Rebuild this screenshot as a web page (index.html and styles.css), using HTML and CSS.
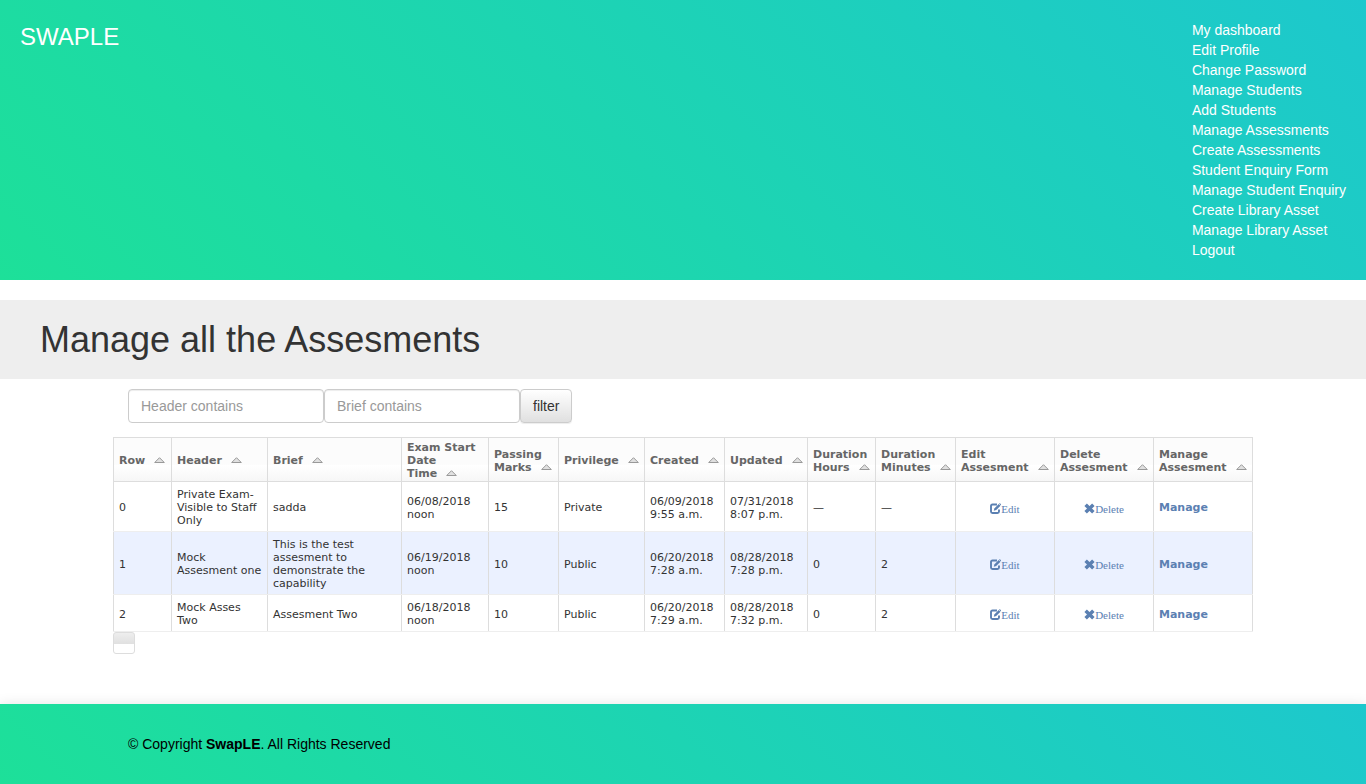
FILE: index.html
```
<!DOCTYPE html>
<html lang="en">
<head>
<meta charset="utf-8">
<title>Manage all the Assesments</title>
<link rel="stylesheet" href="styles.css">
</head>
<body>
<svg class="symbols" aria-hidden="true">
  <symbol id="sort" viewBox="0 0 11 6"><path d="M.7 5.500 5.500.7l4.800 4.800z" fill="#e0e0e0" stroke="#999" stroke-width="1"/></symbol>
  <symbol id="edit" viewBox="0 0 11 11"><path d="M7 1.500H2.500Q1 1.500 1 3v5.500Q1 10 2.500 10h5Q9 10 9 8.500V6.500" fill="none" stroke="currentColor" stroke-width="1.900"/><path d="M3.800 7.700l.5-2.300L8.700 1 10.500 2.800 6.200 7.100z" fill="currentColor"/><path d="M9.200.5l.5-.5L11 1.300v.6l-.4.300z" fill="currentColor"/></symbol>
  <symbol id="remove" viewBox="0 0 10 10"><path d="M1.500 1.500l7 7M8.500 1.500l-7 7" stroke="currentColor" stroke-width="3.200"/></symbol>
</svg>
<header class="header">
  <a class="brand" href="#">SWAPLE</a>
  <nav class="menu">
    <a href="#">My dashboard</a>
    <a href="#">Edit Profile</a>
    <a href="#">Change Password</a>
    <a href="#">Manage Students</a>
    <a href="#">Add Students</a>
    <a href="#">Manage Assessments</a>
    <a href="#">Create Assessments</a>
    <a href="#">Student Enquiry Form</a>
    <a href="#">Manage Student Enquiry</a>
    <a href="#">Create Library Asset</a>
    <a href="#">Manage Library Asset</a>
    <a href="#">Logout</a>
  </nav>
</header>
<section class="banner"><h1>Manage all the Assesments</h1></section>
<main class="container">
  <form class="filter">
    <input class="field" type="text" placeholder="Header contains" aria-label="Header contains">
    <input class="field" type="text" placeholder="Brief contains" aria-label="Brief contains">
    <button class="btn" type="button">filter</button>
  </form>
  <table class="grid">
    <colgroup><col class="w-row"><col class="w-header"><col class="w-brief"><col class="w-start"><col class="w-marks"><col class="w-priv"><col class="w-created"><col class="w-updated"><col class="w-hours"><col class="w-minutes"><col class="w-action"><col class="w-action"><col class="w-action"></colgroup>
    <thead>
      <tr>
        <th>Row<svg class="sort"><use href="#sort"/></svg></th>
        <th>Header<svg class="sort"><use href="#sort"/></svg></th>
        <th>Brief<svg class="sort"><use href="#sort"/></svg></th>
        <th>Exam Start<br>Date<br>Time<svg class="sort"><use href="#sort"/></svg></th>
        <th>Passing<br>Marks<svg class="sort"><use href="#sort"/></svg></th>
        <th>Privilege<svg class="sort"><use href="#sort"/></svg></th>
        <th>Created<svg class="sort"><use href="#sort"/></svg></th>
        <th>Updated<svg class="sort"><use href="#sort"/></svg></th>
        <th>Duration<br>Hours<svg class="sort"><use href="#sort"/></svg></th>
        <th>Duration<br>Minutes<svg class="sort"><use href="#sort"/></svg></th>
        <th>Edit<br>Assesment<svg class="sort"><use href="#sort"/></svg></th>
        <th>Delete<br>Assesment<svg class="sort"><use href="#sort"/></svg></th>
        <th>Manage<br>Assesment<svg class="sort"><use href="#sort"/></svg></th>
      </tr>
    </thead>
    <tbody>
      <tr>
        <td>0</td><td>Private Exam-<br>Visible to Staff<br>Only</td><td>sadda</td><td>06/08/2018<br>noon</td><td>15</td><td>Private</td><td>06/09/2018<br>9:55 a.m.</td><td>07/31/2018<br>8:07 p.m.</td><td>—</td><td>—</td>
        <td class="act"><a class="icon-link" href="#"><svg class="glyph"><use href="#edit"/></svg>Edit</a></td>
        <td class="act"><a class="icon-link" href="#"><svg class="glyph"><use href="#remove"/></svg>Delete</a></td>
        <td><a class="manage" href="#">Manage</a></td>
      </tr>
      <tr class="alt">
        <td>1</td><td>Mock<br>Assesment one</td><td>This is the test<br>assesment to<br>demonstrate the<br>capability</td><td>06/19/2018<br>noon</td><td>10</td><td>Public</td><td>06/20/2018<br>7:28 a.m.</td><td>08/28/2018<br>7:28 p.m.</td><td>0</td><td>2</td>
        <td class="act"><a class="icon-link" href="#"><svg class="glyph"><use href="#edit"/></svg>Edit</a></td>
        <td class="act"><a class="icon-link" href="#"><svg class="glyph"><use href="#remove"/></svg>Delete</a></td>
        <td><a class="manage" href="#">Manage</a></td>
      </tr>
      <tr>
        <td>2</td><td>Mock Asses<br>Two</td><td>Assesment Two</td><td>06/18/2018<br>noon</td><td>10</td><td>Public</td><td>06/20/2018<br>7:29 a.m.</td><td>08/28/2018<br>7:32 p.m.</td><td>0</td><td>2</td>
        <td class="act"><a class="icon-link" href="#"><svg class="glyph"><use href="#edit"/></svg>Edit</a></td>
        <td class="act"><a class="icon-link" href="#"><svg class="glyph"><use href="#remove"/></svg>Delete</a></td>
        <td><a class="manage" href="#">Manage</a></td>
      </tr>
    </tbody>
  </table>
  <div class="pager"></div>
</main>
<footer class="footer">
  <p class="copy">© Copyright <strong>SwapLE</strong>. All Rights Reserved</p>
</footer>
</body>
</html>
```

FILE: styles.css
```
* { box-sizing: border-box; }
body {
  margin: 0;
  background: #fff;
  color: #333;
  font: 14px/20px "Liberation Sans", Arial, sans-serif;
}
a { text-decoration: none; }
.symbols { display: none; }
.header {
  display: flex;
  justify-content: space-between;
  align-items: flex-start;
  padding: 20px;
  background: linear-gradient(45deg, #1de099, #1dc8cd);
}
.brand { color: #fff; font-size: 24px; line-height: 34px; }
.menu { display: flex; flex-direction: column; }
.menu a { color: #fff; }
.banner { margin-top: 20px; padding: 20px 40px; background: #eee; }
.banner h1 { margin: 0; font-size: 36px; line-height: 39px; font-weight: 400; }
.container { max-width: 1170px; margin: 0 auto; padding: 10px 15px 50px; }
.filter { display: flex; padding: 0 15px; margin-bottom: 14px; }
.field {
  width: 196px;
  height: 34px;
  padding: 6px 12px;
  border: 1px solid #ccc;
  border-radius: 4px;
  background: #fff;
  color: #555;
  font: inherit;
  box-shadow: inset 0 1px 1px rgba(0, 0, 0, .075);
}
.field::placeholder { color: #999; opacity: 1; }
.btn {
  height: 34px;
  padding: 6px 12px;
  border: 1px solid #ccc;
  border-radius: 4px;
  background: linear-gradient(#fff, #e0e0e0);
  color: #333;
  font: inherit;
  box-shadow: inset 0 1px 0 rgba(255, 255, 255, .15), 0 1px 1px rgba(0, 0, 0, .075);
}
.grid {
  width: 100%;
  table-layout: fixed;
  border-collapse: collapse;
  border: 1px solid #ddd;
  font: 11px/13px Verdana, "DejaVu Sans", sans-serif;
}
.w-row { width: 58px; }
.w-header { width: 96px; }
.w-brief { width: 134px; }
.w-start { width: 87px; }
.w-marks { width: 70px; }
.w-priv { width: 86px; }
.w-created { width: 80px; }
.w-updated { width: 83px; }
.w-hours { width: 68px; }
.w-minutes { width: 80px; }
.w-action { width: 99px; }
.grid th {
  padding: 3px 0 1px 5px;
  border: 1px solid #ddd;
  color: #666;
  text-align: left;
  vertical-align: middle;
  white-space: nowrap;
}
.grid thead tr { background: linear-gradient(#fcfcfc 0 60%, #fff 62%, #f6f6f6); }
.grid td {
  padding: 6px 0 4px 5px;
  border: 1px solid #ddd;
  border-top-color: #eee;
  border-bottom-color: #eee;
  vertical-align: middle;
  white-space: nowrap;
}
.grid tbody tr:first-child td { border-top-color: #ddd; }
.grid .alt { background: #ebf1ff; }
.grid .act { padding: 9px 0 3px; text-align: center; }
.sort { width: 11px; height: 6px; margin-left: 9px; vertical-align: 1px; }
.icon-link {
  display: inline-flex;
  align-items: center;
  color: #5b80b2;
  font: 11px/13px "Liberation Serif", "Times New Roman", serif;
}
.glyph { width: 11px; height: 11px; margin-bottom: 2px; }
.manage { color: #5b80b2; font-weight: 700; }
.pager {
  width: 22px;
  height: 22px;
  border: 1px solid #ddd;
  border-radius: 3px;
  background: linear-gradient(#eee, #e0e0e0 55%, #fff 55%);
}
.footer {
  padding: 30px 15px;
  background: linear-gradient(45deg, #1de099, #1dc8cd);
  box-shadow: 0 0 12px rgba(0, 0, 0, .1);
  color: #000;
}
.copy { max-width: 1140px; margin: 0 auto; padding: 0 15px; }
```
